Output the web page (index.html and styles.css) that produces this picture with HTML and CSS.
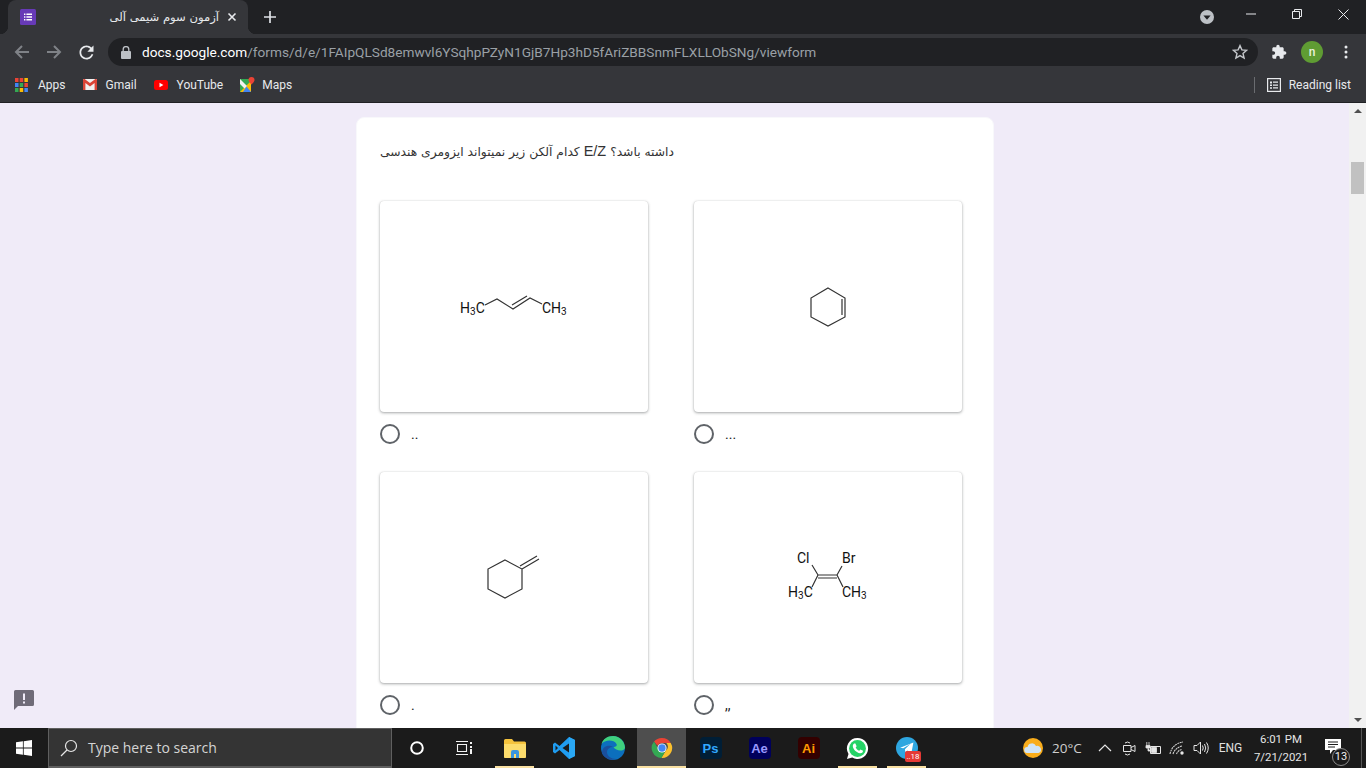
FILE: index.html
```html
<!DOCTYPE html>
<html lang="en">
<head>
<meta charset="utf-8">
<title>آزمون سوم شیمی آلی</title>
<link rel="stylesheet" href="styles.css">
</head>
<body>
<div class="screen">
  <header class="tabstrip">
    <div class="tab">
      <svg class="tab-favicon" width="16" height="16" viewBox="0 0 16 16"><rect width="16" height="16" rx="1.5" fill="#673ab7"/><path d="M4 4.500h1.400v1.400H4zM6.400 4.500H12v1.400H6.400zM4 7.300h1.400v1.400H4zM6.400 7.300H12v1.400H6.400zM4 10.100h1.400v1.400H4zM6.400 10.100H12v1.400H6.400z" fill="#fff"/></svg>
      <span class="tab-title" dir="rtl">آزمون سوم شیمی آلی</span>
      <svg class="tab-close" width="10" height="10" viewBox="0 0 10 10"><path d="M1.500 1.500l7 7M8.500 1.500l-7 7" stroke="#e8eaed" stroke-width="1.600"/></svg>
    </div>
    <svg class="new-tab" width="12" height="12" viewBox="0 0 12 12"><path d="M6 0v12M0 6h12" stroke="#dee1e6" stroke-width="1.700"/></svg>
    <div class="win-controls">
      <svg class="profile-drop" width="14" height="14" viewBox="0 0 14 14"><circle cx="7" cy="7" r="7" fill="#bdc1c6"/><path d="M3.400 5.400h7.200L7 9.800z" fill="#202124"/></svg>
      <div class="win-btn"><svg width="10" height="10" viewBox="0 0 10 10"><path d="M0 5h10" stroke="#e8eaed"/></svg></div>
      <div class="win-btn"><svg width="10" height="10" viewBox="0 0 10 10"><path d="M2.500 2.500V.5h7v7h-2M.5 2.500h7v7h-7z" fill="none" stroke="#e8eaed"/></svg></div>
      <div class="win-btn"><svg width="11" height="11" viewBox="0 0 11 11"><path d="M.5.500l10 10M10.500.5l-10 10" stroke="#e8eaed"/></svg></div>
    </div>
  </header>

  <nav class="toolbar">
    <svg class="nav-icon" width="16" height="16" viewBox="0 0 16 16"><path d="M15 8H2M8 2L2 8l6 6" fill="none" stroke="#7f8287" stroke-width="2"/></svg>
    <svg class="nav-icon" width="16" height="16" viewBox="0 0 16 16"><path d="M1 8h13M8 2l6 6-6 6" fill="none" stroke="#7f8287" stroke-width="2"/></svg>
    <svg class="nav-icon nav-reload" width="21" height="21" viewBox="0 0 24 24"><path d="M17.650 6.350C16.200 4.900 14.210 4 12 4c-4.420 0-7.990 3.580-7.990 8s3.570 8 7.990 8c3.730 0 6.840-2.550 7.730-6h-2.080c-.82 2.330-3.040 4-5.650 4-3.310 0-6-2.690-6-6s2.690-6 6-6c1.660 0 3.140.69 4.220 1.780L13 11h7V4l-2.350 2.350z" fill="#e8eaed"/></svg>
    <div class="omnibox">
      <svg class="lock" width="10" height="13" viewBox="0 0 10 13"><path d="M2.200 5V3.400a2.800 2.800 0 0 1 5.600 0V5" fill="none" stroke="#bdc1c6" stroke-width="1.300"/><rect y="5" width="10" height="8" rx="1" fill="#bdc1c6"/></svg>
      <span class="url"><span class="url-host">docs.google.com</span>/forms/d/e/1FAIpQLSd8emwvl6YSqhpPZyN1GjB7Hp3hD5fAriZBBSnmFLXLLObSNg/viewform</span>
      <svg class="star" width="16" height="16" viewBox="0 0 16 16"><path d="M8 1.600l1.900 4.300 4.700.4-3.600 3.100 1.100 4.600L8 11.600 3.900 14 5 9.400 1.400 6.300l4.700-.4z" fill="none" stroke="#c4c7cb" stroke-width="1.400"/></svg>
    </div>
    <svg class="puzzle" width="16" height="16" viewBox="0 0 24 24"><path d="M20.500 11H19V7c0-1.100-.9-2-2-2h-4V3.500C13 2.120 11.880 1 10.500 1S8 2.120 8 3.500V5H4c-1.100 0-1.990.9-1.990 2v3.800H3.500c1.490 0 2.700 1.210 2.700 2.700s-1.210 2.700-2.700 2.700H2V20c0 1.100.9 2 2 2h3.800v-1.500c0-1.490 1.210-2.700 2.700-2.700 1.490 0 2.700 1.210 2.700 2.700V22H17c1.100 0 2-.9 2-2v-4h1.500c1.380 0 2.500-1.120 2.500-2.500S21.880 11 20.500 11z" fill="#e8eaed"/></svg>
    <span class="avatar">n</span>
    <svg class="dots" width="4" height="14" viewBox="0 0 4 14"><circle cx="2" cy="2" r="1.500" fill="#e8eaed"/><circle cx="2" cy="7" r="1.500" fill="#e8eaed"/><circle cx="2" cy="12" r="1.500" fill="#e8eaed"/></svg>
  </nav>

  <nav class="bookmarks">
    <div class="bm bm-apps">
      <svg width="13" height="14" viewBox="0 0 13 14"><rect width="3.500" height="4" fill="#ea4335"/><rect x="4.700" width="3.500" height="4" fill="#ea4335"/><rect x="9.400" width="3.500" height="4" fill="#fbbc05"/><rect y="5" width="3.500" height="4" fill="#4285f4"/><rect x="4.700" y="5" width="3.500" height="4" fill="#34a853"/><rect x="9.400" y="5" width="3.500" height="4" fill="#ea4335"/><rect y="10" width="3.500" height="4" fill="#34a853"/><rect x="4.700" y="10" width="3.500" height="4" fill="#fbbc05"/><rect x="9.400" y="10" width="3.500" height="4" fill="#4285f4"/></svg>
      <span>Apps</span>
    </div>
    <div class="bm bm-gmail">
      <svg width="14" height="11" viewBox="0 0 14 11"><rect width="14" height="11" rx="1" fill="#f1f1f1"/><path d="M0 1v10h2.400V4L7 7.400 11.600 4v7H14V1q0-1-1-1h-.6L7 4 1.600 0H1Q0 0 0 1z" fill="#db4437"/></svg>
      <span>Gmail</span>
    </div>
    <div class="bm bm-yt">
      <svg width="14" height="10" viewBox="0 0 14 10"><rect width="14" height="10" rx="2.500" fill="#f00"/><path d="M5.500 2.800v4.400L9.400 5z" fill="#fff"/></svg>
      <span>YouTube</span>
    </div>
    <div class="bm bm-maps">
      <svg width="15" height="15" viewBox="0 0 15 15"><path d="M0 2h11v13H0z" fill="#34a853"/><path d="M0 15L11 4v11z" fill="#fbbc05"/><path d="M0 2l7 7-2.500 2.500L0 7z" fill="#f1f1f1"/><path d="M6.500 9.500L11 15H3z" fill="#4285f4"/><path d="M11.500 0a3 3 0 0 1 3 3c0 2-3 4.500-3 4.500S8.500 5 8.500 3a3 3 0 0 1 3-3z" fill="#ea4335"/></svg>
      <span>Maps</span>
    </div>
    <div class="bm-sep"></div>
    <div class="bm bm-reading">
      <svg width="14" height="14" viewBox="0 0 14 14"><rect x=".6" y=".6" width="12.800" height="12.800" fill="none" stroke="#e8eaed" stroke-width="1.200"/><path d="M3 3.500h2v2H3zM6 3.500h5v1.300H6zM3 6.500h2v1.500H3zM6 6.500h5v1.300H6zM3 9.300h2v1.500H3zM6 9.300h5v1.300H6z" fill="#e8eaed"/></svg>
      <span>Reading list</span>
    </div>
  </nav>

  <div class="viewport">
    <main class="page">
      <section class="card">
        <p class="question">کدام آلکن زیر نمیتواند ایزومری هندسی <span class="latin">E/Z</span> داشته باشد؟</p>
        <div class="options">
          <div class="option">
            <div class="image-card">
              <svg class="mol" viewBox="380 201 268 211">
                <path class="bond" d="M485 305l12-6 16 10 17-11 12 6M512 305l15-9"/>
                <text class="atom" x="460" y="313">H<tspan class="sub" dy="2">3</tspan><tspan dy="-2">C</tspan></text>
                <text class="atom" x="542" y="313">CH<tspan class="sub" dy="2">3</tspan></text>
              </svg>
            </div>
            <label class="choice"><span class="radio"></span><span class="choice-text">..</span></label>
          </div>
          <div class="option">
            <div class="image-card">
              <svg class="mol" viewBox="694 201 268 211">
                <path class="bond" d="M828 288l17 10v19l-17 9-17-9v-19zM842 299v16"/>
              </svg>
            </div>
            <label class="choice"><span class="radio"></span><span class="choice-text">...</span></label>
          </div>
          <div class="option">
            <div class="image-card">
              <svg class="mol" viewBox="380 472 268 211">
                <path class="bond" d="M505 560l17 9v20l-17 9-17-9v-20zM522 569l17-10M520 566l17-10"/>
              </svg>
            </div>
            <label class="choice"><span class="radio"></span><span class="choice-text">.</span></label>
          </div>
          <div class="option">
            <div class="image-card">
              <svg class="mol" viewBox="694 472 268 211">
                <path class="bond" d="M812 565l6 10h19l5-9M818 578h19M818 575l-6 12M837 575l6 12"/>
                <text class="atom" x="797" y="563">Cl</text>
                <text class="atom" x="842" y="563">Br</text>
                <text class="atom" x="788" y="597">H<tspan class="sub" dy="2">3</tspan><tspan dy="-2">C</tspan></text>
                <text class="atom" x="842" y="597">CH<tspan class="sub" dy="2">3</tspan></text>
              </svg>
            </div>
            <label class="choice"><span class="radio"></span><span class="choice-text">,,</span></label>
          </div>
        </div>
      </section>
      <svg class="feedback" width="20" height="20" viewBox="0 0 20 20"><path d="M0 1.500A1.500 1.500 0 0 1 1.500 0h17A1.500 1.500 0 0 1 20 1.500v13a1.500 1.500 0 0 1-1.500 1.500H4l-4 4z" fill="#6f6b78"/><path d="M9 3.500h2v6.500H9zM9 11.500h2v2H9z" fill="#f0ebf8"/></svg>
    </main>
    <aside class="scrollbar">
      <span class="sb-up"></span>
      <span class="sb-thumb"></span>
      <span class="sb-down"></span>
    </aside>
  </div>

  <footer class="taskbar">
    <div class="start"><svg width="16" height="16" viewBox="0 0 16 16"><path d="M0 2.300l6.900-1v6.200H0zM7.700 1.200L16 0v7.500H7.700zM0 8.400h6.900v6.300l-6.900-1zM7.700 8.400H16V16l-8.300-1.200z" fill="#fff"/></svg></div>
    <div class="searchbox">
      <svg width="18" height="18" viewBox="0 0 18 18"><circle cx="11" cy="7" r="5.500" fill="none" stroke="#e6e6e6" stroke-width="1.200"/><path d="M7 11l-6 6" stroke="#e6e6e6" stroke-width="1.300"/></svg>
      <span>Type here to search</span>
    </div>
    <div class="slot"><svg width="14" height="14" viewBox="0 0 14 14"><circle cx="7" cy="7" r="5.800" fill="none" stroke="#fff" stroke-width="2"/></svg></div>
    <div class="slot"><svg class="taskview" width="16" height="14" viewBox="0 0 16 14"><path d="M0 .5h12M0 13.500h12M1.500 3.500h9v7h-9z" fill="none" stroke="#f2f2f2" stroke-width="1.100"/><path d="M14 1h2v2h-2zM14 5h2v2h-2zM14 8h2v5h-2z" fill="#f2f2f2"/></svg></div>
    <div class="slot slot-open"><svg width="22" height="19" viewBox="0 0 22 19"><path d="M0 1.500Q0 0 1.500 0H8l2 2.500h10.500Q22 2.500 22 4v13.500Q22 19 20.500 19h-19Q0 19 0 17.500z" fill="#f5c33d"/><path d="M0 5h22v12.500Q22 19 20.500 19h-19Q0 19 0 17.500z" fill="#fcdc6c"/><path d="M7 19v-6a2 2 0 0 1 2-2h4a2 2 0 0 1 2 2v6h-3v-4h-2v4z" fill="#3a96dd"/></svg></div>
    <div class="slot"><svg width="24" height="24" viewBox="0 0 24 24"><path d="M17 1L7.500 10 3 6.500 1 8v8l2 1.500L7.500 14 17 23l6-3V4z" fill="#1f9cf0"/><path d="M3.500 9.500L6 12l-2.500 2.500z" fill="#1b1b1b"/><path d="M17 1l6 3v16l-6 3z" fill="#2aa8f5"/><path d="M17 7.500v9L10.500 12z" fill="#1b1b1b"/></svg></div>
    <div class="slot"><svg width="24" height="24" viewBox="0 0 24 24"><circle cx="12" cy="12" r="12" fill="#0c6fbd"/><path d="M24 12c0-6-5-12-12-12C6 0 2 3 .5 8c3-4 12-5 15 0 1 2-1 3-3 3 2 4 10 5 11.500 1z" fill="#3fd07e"/><path d="M12 11c-4-3-11-1-11 6 2 5 8 8 14 6-5 0-9-3-9-7 0-3 3-5 6-5z" fill="#1a4f9c"/></svg></div>
    <div class="slot slot-active"><svg width="22" height="22" viewBox="0 0 24 24"><path d="M12 1a11 11 0 0 1 9.530 5.500H12a5.500 5.500 0 0 0-4.900 3L3.300 5A11 11 0 0 1 12 1z" fill="#ea4335"/><path d="M21.530 6.500A11 11 0 0 1 11.300 23l4.500-7.800a5.500 5.500 0 0 0 .9-8.700z" fill="#fbc02d"/><path d="M3.300 5l4.600 8a5.500 5.500 0 0 0 7.900 2.200L11.300 23A11 11 0 0 1 3.300 5z" fill="#34a853"/><circle cx="12" cy="12" r="5" fill="#fff"/><circle cx="12" cy="12" r="4" fill="#4285f4"/></svg></div>
    <div class="slot"><span class="app app-ps">Ps</span></div>
    <div class="slot"><span class="app app-ae">Ae</span></div>
    <div class="slot"><span class="app app-ai">Ai</span></div>
    <div class="slot slot-open"><svg width="23" height="23" viewBox="0 0 24 24"><path d="M12 1a11 11 0 0 0-9.400 16.700L1 23l5.500-1.500A11 11 0 1 0 12 1z" fill="#fff"/><circle cx="12" cy="12" r="8.800" fill="#25d366"/><path d="M8.500 6.800l1.300-.1 1.300 2.900-1 1.400c.8 1.600 2 2.700 3.700 3.400l1.200-1.300 2.800 1.300c0 2-1.700 2.800-3.200 2.600-3.900-.6-7.100-4-7.500-7.300-.1-1.200.5-2.200 1.400-2.900z" fill="#fff"/></svg></div>
    <div class="slot slot-open"><svg width="22" height="22" viewBox="0 0 24 24"><circle cx="12" cy="12" r="12" fill="#2ea6e0"/><path d="M4.500 11.800L19 6l-2.300 12-4.300-3.200-2.200 2.200-.5-3.700 6.200-5.900-8 5z" fill="#fff"/></svg><span class="badge">..18</span></div>
    <div class="tray">
      <svg class="weather" width="20" height="20" viewBox="0 0 20 20"><circle cx="10" cy="10" r="10" fill="#f9ad1c"/><path d="M4 15a3 3 0 0 1 .5-6 4.500 4.500 0 0 1 8.500-1 3.500 3.500 0 0 1 2.500 7z" fill="#cfe4f7"/></svg>
      <span class="temp">20°C</span>
      <div class="tray-icon tray-first"><svg width="14" height="8" viewBox="0 0 14 8"><path d="M1 7l6-6 6 6" fill="none" stroke="#e6e6e6" stroke-width="1.200"/></svg></div>
      <div class="tray-icon"><svg width="14" height="17" viewBox="0 0 14 17"><path d="M1.500 5.500h7.500v6H1.500zM9 7.500l4-2v6l-4-2M3 3q2.500-2 5 0M3 14q2.500 2 5 0" fill="none" stroke="#e6e6e6"/></svg></div>
      <div class="tray-icon"><svg width="16" height="13" viewBox="0 0 16 13"><path d="M5.500 4.500h10v7h-10z" fill="none" stroke="#e6e6e6"/><path d="M6.500 5.500h5v5h-5zM1 3.500h4V6H1zM1.800 0v3.500M4 0v3.500M3 6v3h3" fill="#e6e6e6" stroke="#e6e6e6" stroke-width=".8"/></svg></div>
      <div class="tray-icon"><svg width="16" height="14" viewBox="0 0 16 14"><path d="M1 13Q3 3 14 1M4 13q2-6 9-8M7.500 13q1-3 5-4.500" fill="none" stroke="#cfcfcf" stroke-width="1.100" stroke-dasharray="2 .6"/><circle cx="13" cy="12" r="1.700" fill="#e6e6e6"/></svg></div>
      <div class="tray-icon"><svg width="16" height="14" viewBox="0 0 16 14"><path d="M1 4.500h3L7.500 1v12L4 9.500H1zM9.500 4.500q1.500 2.500 0 5M11.500 3q2.500 4 0 8M13.500 1.500q3.500 5.500 0 11" fill="none" stroke="#e6e6e6"/></svg></div>
      <span class="lang">ENG</span>
      <div class="clock"><span>6:01 PM</span><span>7/21/2021</span></div>
      <div class="notify"><svg width="17" height="15" viewBox="0 0 17 15"><path d="M0 0h16v11H8l-3 4v-4H0z" fill="#fff"/><path d="M3 3h10M3 5.500h10M3 8h7" stroke="#1b1b1b"/></svg><span class="notify-count">13</span></div>
      <span class="desk-line"></span>
    </div>
  </footer>
</div>
</body>
</html>
```
FILE: styles.css
```css
* { box-sizing: border-box; }
html, body { margin: 0; padding: 0; height: 100%; overflow: hidden; }
body { font-family: "Roboto", "Open Sans", "DejaVu Sans", sans-serif; }
svg { display: block; flex: none; }
.screen { width: 1366px; height: 768px; display: flex; flex-direction: column; overflow: hidden; }

/* Tab strip */
.tabstrip { height: 34px; background: #202124; display: flex; align-items: center; padding-left: 8px; flex: none; }
.tab { position: relative; width: 240px; height: 34px; background: #35363a; border-radius: 8px 8px 0 0; display: flex; align-items: center; padding: 0 11px 0 12px; }
.tab::before, .tab::after { content: ""; position: absolute; bottom: 0; width: 8px; height: 8px; background: radial-gradient(circle at 0 0, #202124 8px, #35363a 8.5px); }
.tab::before { left: -8px; }
.tab::after { right: -8px; transform: scaleX(-1); }
.tab-title { margin-left: auto; font-family: "DejaVu Sans", sans-serif; font-size: 11.600px; color: #e8eaed; white-space: nowrap; }
.tab-close { margin-left: 8px; }
.new-tab { margin-left: 16px; }
.win-controls { margin-left: auto; display: flex; align-items: center; }
.profile-drop { margin-right: 14px; }
.win-btn { width: 46px; height: 34px; padding-bottom: 6px; display: flex; align-items: center; justify-content: center; }

/* Toolbar */
.toolbar { height: 36px; background: #35363a; display: flex; align-items: center; padding-left: 14px; flex: none; }
.nav-icon { margin-right: 16px; }
.nav-reload { margin: 0 11.500px 0 -2.500px; }
.omnibox { width: 1150px; height: 28px; border-radius: 14px; background: #202124; display: flex; align-items: center; padding: 0 10px 0 13px; }
.lock { margin-right: 11px; }
.url { font-size: 13.650px; color: #9aa0a6; white-space: nowrap; }
.url-host { color: #fff; }
.star { margin-left: auto; }
.puzzle { margin-left: 13px; }
.avatar { width: 22px; height: 22px; margin-left: 14px; border-radius: 50%; background: #5f9c33; color: #e8f2da; font-size: 12px; font-weight: 500; display: flex; align-items: center; justify-content: center; }
.dots { margin-left: 21px; }

/* Bookmarks */
.bookmarks { height: 33px; background: #35363a; border-bottom: 1px solid #202124; display: flex; align-items: center; padding-bottom: 3px; flex: none; font-size: 12px; color: #e8eaed; }
.bm { display: flex; align-items: center; }
.bm-apps { margin-left: 15px; gap: 10px; }
.bm-gmail { margin-left: 17px; gap: 9px; }
.bm-yt { margin-left: 17px; gap: 9px; }
.bm-maps { margin-left: 17px; gap: 7px; }
.bm-sep { width: 1px; height: 16px; background: #6a6c70; margin-left: auto; }
.bm-reading { margin: 0 15px 0 12px; gap: 8px; }

/* Page */
.viewport { flex: 1; min-height: 0; display: flex; overflow: hidden; background: #f0ebf8; }
.page { position: relative; flex: 1; min-width: 0; padding-top: 14px; padding-left: 356px; overflow: hidden; }
.card { width: 638px; background: #fff; border: 1px solid #f8f8fb; border-radius: 8px; padding: 23px 23px 24px; }
.question { margin: 0 0 40px; height: 20px; font-family: "DejaVu Sans", sans-serif; font-size: 12.300px; line-height: 20px; color: #333; white-space: nowrap; }
.latin { font-family: "Liberation Sans", sans-serif; font-size: 14.500px; }
.options { display: grid; grid-template-columns: 268px 268px; column-gap: 46px; row-gap: 28px; }
.image-card { height: 211px; background: #fff; border-radius: 4px; box-shadow: 0 1px 3px rgba(60, 64, 67, .45), 0 0 1px rgba(60, 64, 67, .2); }
.mol { width: 268px; height: 211px; }
.bond { fill: none; stroke: #333; stroke-width: 1.200; }
.atom { font-family: "Roboto", sans-serif; font-size: 14px; fill: #111; }
.sub { font-size: 10px; }
.choice { display: flex; align-items: center; height: 20px; margin-top: 12px; }
.radio { width: 20px; height: 20px; border: 2px solid #5f6368; border-radius: 50%; flex: none; }
.choice-text { margin-left: 11px; font-size: 14px; color: #202124; }
.feedback { position: absolute; left: 14px; top: 587px; }

/* Scrollbar */
.scrollbar { width: 17px; background: #f1f1f1; display: flex; flex-direction: column; align-items: center; flex: none; }
.sb-up { margin-top: 6px; border: 4px solid transparent; border-top: 0; border-bottom: 4px solid #505050; }
.sb-thumb { width: 13px; height: 32px; margin-top: 49px; background: #c1c1c1; }
.sb-down { margin-top: auto; margin-bottom: 6px; border: 4px solid transparent; border-bottom: 0; border-top: 4px solid #505050; }

/* Taskbar */
.taskbar { height: 40px; background: #1b1b1b; display: flex; align-items: center; color: #e6e6e6; flex: none; }
.start { width: 48px; height: 40px; display: flex; align-items: center; justify-content: center; }
.searchbox { width: 344px; height: 40px; background: #343434; border: 1px solid #5f5f5f; border-bottom-width: 2px; display: flex; align-items: center; padding-left: 11px; gap: 10px; font-family: "Open Sans", sans-serif; font-size: 14px; color: #d4d4d4; }
.slot { position: relative; width: 49px; height: 40px; display: flex; align-items: center; justify-content: center; }
.slot-open::after, .slot-active::after { content: ""; position: absolute; bottom: 0; height: 2px; background: #f9e0a2; }
.slot-open::after { left: 5px; right: 5px; }
.slot-active::after { left: 0; right: 0; }
.slot-active { background: #4e4e4e; }
.taskview { margin-left: -3px; }
.app { width: 22px; height: 22px; border-radius: 4px; display: flex; align-items: center; justify-content: center; font-family: "Liberation Sans", sans-serif; font-size: 13px; font-weight: 700; }
.app-ps { background: #001e36; color: #31a8ff; }
.app-ae { background: #00005b; color: #9999ff; }
.app-ai { background: #330000; color: #ff9a00; }
.badge { position: absolute; left: 23px; top: 23px; width: 16px; height: 11px; background: #e53935; border-radius: 2px; font-size: 8px; line-height: 11px; text-align: center; color: #fff; }
.tray { margin-left: auto; display: flex; align-items: center; height: 40px; }
.weather { margin-right: 9px; }
.temp { width: 29px; font-family: "Open Sans", sans-serif; font-size: 13.500px; color: #cfcfcf; white-space: nowrap; }
.tray-icon { width: 24px; display: flex; justify-content: center; }
.tray-first { margin-left: 12px; }
.lang { width: 35px; text-align: center; font-size: 12px; color: #e0e0e0; }
.clock { width: 66px; display: flex; flex-direction: column; align-items: center; font-size: 11.400px; line-height: 18px; color: #e6e6e6; }
.notify { position: relative; width: 38px; height: 40px; display: flex; align-items: center; justify-content: center; padding-bottom: 3px; }
.notify-count { position: absolute; left: 18px; top: 20px; width: 18px; height: 18px; border-radius: 50%; background: #1b1b1b; border: 1px solid #8a8a8a; font-size: 11px; line-height: 16px; text-align: center; color: #f0f0f0; }
.desk-line { width: 1px; height: 40px; margin: 0 4px 0 9px; background: #555; }
```
